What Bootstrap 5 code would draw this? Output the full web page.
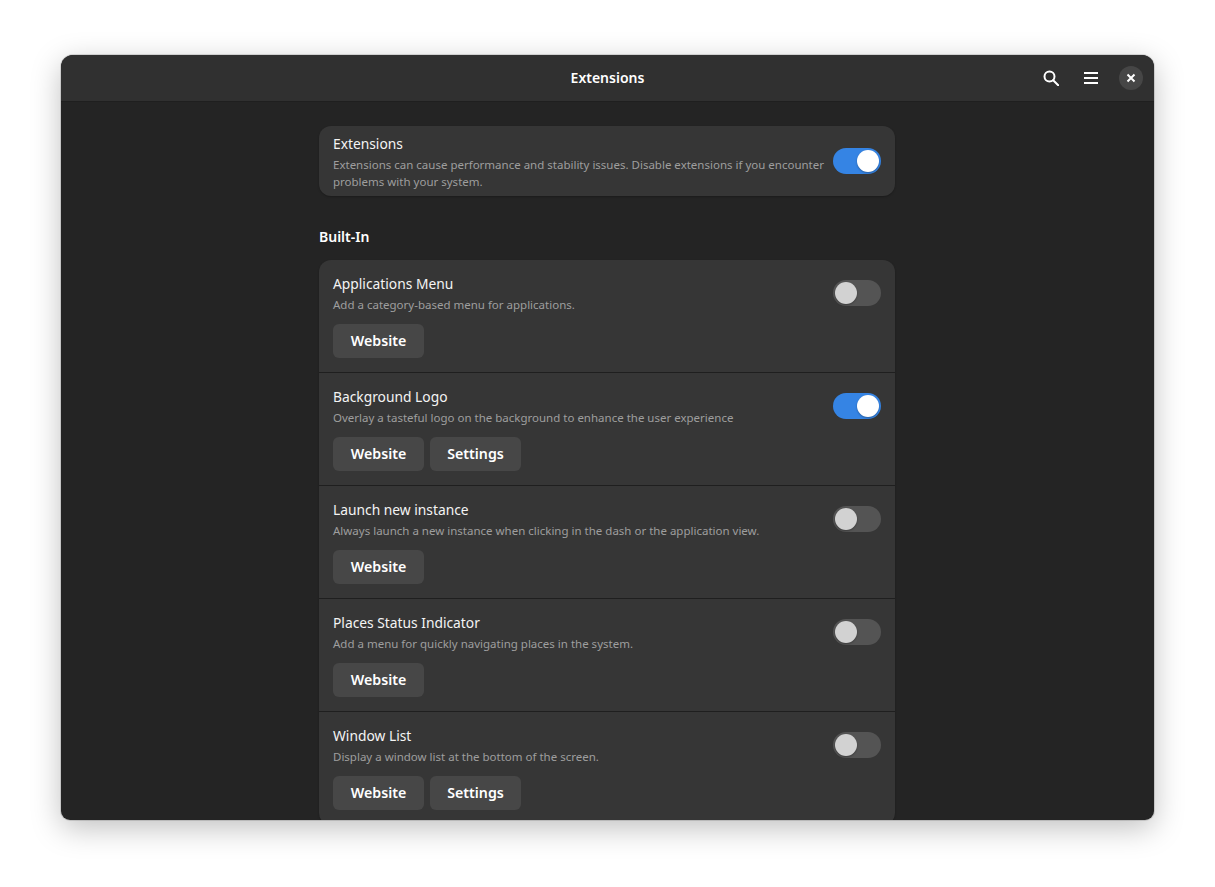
<!DOCTYPE html>
<html lang="en">
<head>
    <meta charset="UTF-8">
    <meta name="viewport" content="width=device-width, initial-scale=1.0">
    <title>Extensions</title>
    <link rel="stylesheet" href="https://cdn.jsdelivr.net/npm/bootstrap@5.3.3/dist/css/bootstrap.min.css">
    <style>
        html, body { height: 100%; }
        body { background: #fff; font-family: "Noto Sans", sans-serif; overflow: hidden; }
        .app-window {
            margin: 55px 0 0 61px; width: 1093px; height: 765px;
            background: #242424; color: #fff; overflow: hidden;
            border-radius: 12px 12px 9px 9px;
            box-shadow: 0 0 0 1px rgba(0,0,0,.12), 0 8px 30px rgba(0,0,0,.25);
        }
        .app-header { height: 47px; padding-bottom: 1px; background: #303030; border-bottom: 1px solid #1f1f1f; }
        .app-title { font-size: 14px; font-weight: 600; }
        .head-icons { padding-right: 11px; padding-bottom: 1px; }
        .head-btn { width: 24px; height: 24px; color: #fff; }
        .close-btn { background: #464646; border-radius: 50%; }
        .app-content { width: 576px; margin-left: 258px; padding-top: 24px; }
        .box { background: #363636; border-radius: 12px; box-shadow: 0 1px 2px rgba(0,0,0,.25); }
        .ext-row { height: 113px; padding: 14px; border-bottom: 1px solid #1f1f1f; }
        .ext-row:last-child { border-bottom: 0; }
        .main-row { height: 70px; padding: 8px 14px 6px; }
        .main-row .switch-track { margin-bottom: 2px; }
        .ext-title { font-size: 13.8px; line-height: 20px; margin-bottom: 2px; color: #f4f4f4; }
        .ext-desc { font-size: 11.5px; line-height: 17px; color: #9e9e9e; }
        .section-title { font-size: 14px; font-weight: 600; line-height: 20px; margin: 31px 0 13px; }
        .ext-actions { gap: 6px; margin-top: 11px; }
        .ext-btn {
            width: 91px; height: 34px; padding: 0; border: 0; border-radius: 6px;
            background: #474747; color: #fff; font-size: 14.2px; font-weight: 600;
        }
        .switch-track { width: 48px; height: 26px; border-radius: 13px; background: #545454; padding: 2px; flex: none; }
        .switch-track.is-on { background: #3584e4; justify-content: flex-end; }
        .switch-knob { width: 22px; height: 22px; border-radius: 50%; background: #d2d2d2; box-shadow: 0 1px 2px rgba(0,0,0,.3); }
        .is-on .switch-knob { background: #fff; }
        .ext-row .switch-track { margin-top: 6px; }
    </style>
</head>
<body>
    <div class="app-window d-flex flex-column">
        <header class="app-header d-flex align-items-center position-relative flex-shrink-0">
            <div class="app-title w-100 text-center">Extensions</div>
            <div class="head-icons position-absolute top-0 end-0 h-100 d-flex align-items-center gap-3">
                <span class="head-btn d-flex align-items-center justify-content-center">
                    <svg width="16" height="16" viewBox="0 0 16 16" fill="none" stroke="#fff" stroke-width="2"><circle cx="6.5" cy="6.5" r="5"/><path d="M10.2 10.2l5 5" stroke-linecap="round"/></svg>
                </span>
                <span class="head-btn d-flex align-items-center justify-content-center">
                    <svg width="14" height="12" viewBox="0 0 14 12" fill="#fff"><rect y="0" width="14" height="2"/><rect y="5" width="14" height="2"/><rect y="10" width="14" height="2"/></svg>
                </span>
                <span class="head-btn close-btn d-flex align-items-center justify-content-center">
                    <svg width="10" height="10" viewBox="0 0 10 10" fill="none" stroke="#fff" stroke-width="2"><path d="M1.5 1.5l7 7M8.5 1.5l-7 7"/></svg>
                </span>
            </div>
        </header>
        <main class="flex-grow-1 overflow-hidden">
            <div class="app-content">
                <div class="box main-row d-flex align-items-center justify-content-between gap-2">
                    <div>
                        <div class="ext-title">Extensions</div>
                        <div class="ext-desc">Extensions can cause performance and stability issues. Disable extensions if you encounter problems with your system.</div>
                    </div>
                    <div class="switch-track is-on d-flex align-items-center"><div class="switch-knob"></div></div>
                </div>

                <div class="section-title">Built-In</div>

                <div class="box" id="extList"></div>
            </div>
        </main>
    </div>
    <script>
        const extensions = [
            { title: 'Applications Menu', desc: 'Add a category-based menu for applications.', on: false, settings: false },
            { title: 'Background Logo', desc: 'Overlay a tasteful logo on the background to enhance the user experience', on: true, settings: true },
            { title: 'Launch new instance', desc: 'Always launch a new instance when clicking in the dash or the application view.', on: false, settings: false },
            { title: 'Places Status Indicator', desc: 'Add a menu for quickly navigating places in the system.', on: false, settings: false },
            { title: 'Window List', desc: 'Display a window list at the bottom of the screen.', on: false, settings: true }
        ];

        document.getElementById('extList').innerHTML = extensions.map(row => `
            <div class="ext-row d-flex justify-content-between">
                <div>
                    <div class="ext-title">${row.title}</div>
                    <div class="ext-desc">${row.desc}</div>
                    <div class="ext-actions d-flex">
                        <button class="ext-btn">Website</button>
                        ${row.settings ? '<button class="ext-btn">Settings</button>' : ''}
                    </div>
                </div>
                <div class="switch-track ${row.on ? 'is-on' : ''} d-flex align-items-center"><div class="switch-knob"></div></div>
            </div>
        `).join('');
    </script>
    <script src="https://cdn.jsdelivr.net/npm/bootstrap@5.3.3/dist/js/bootstrap.bundle.min.js"></script>
</body>
</html>
